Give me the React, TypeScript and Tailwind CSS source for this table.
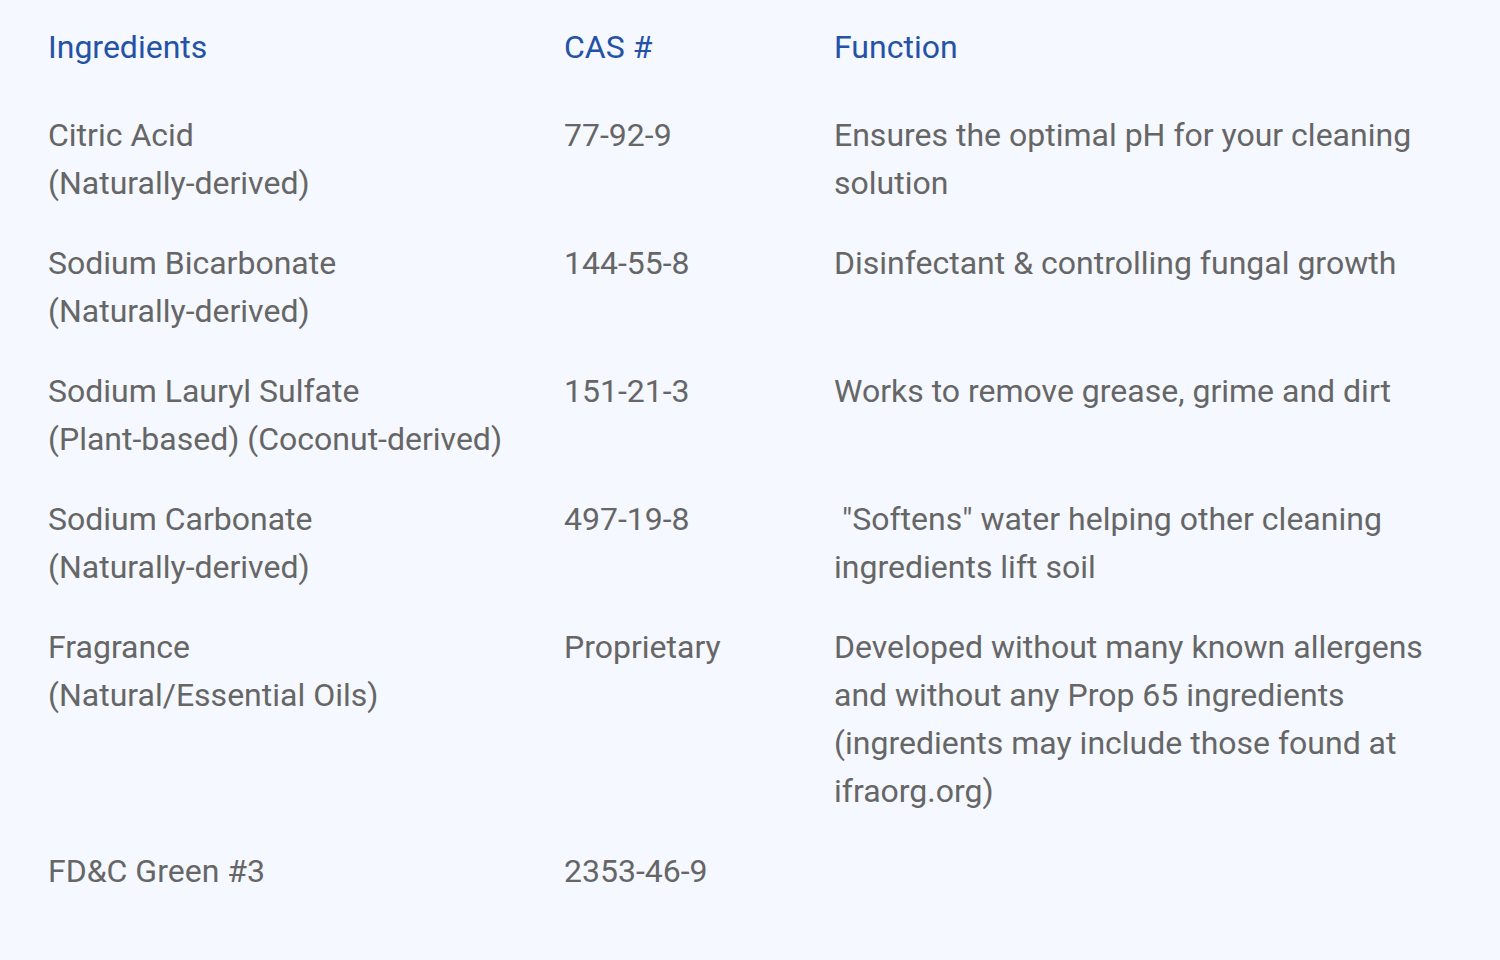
import React from "react";

const rows: { name: string[]; cas: string; fn: React.ReactNode }[] = [
  { name: ["Citric Acid", "(Naturally-derived)"], cas: "77-92-9", fn: "Ensures the optimal pH for your cleaning solution" },
  { name: ["Sodium Bicarbonate", "(Naturally-derived)"], cas: "144-55-8", fn: "Disinfectant & controlling fungal growth" },
  { name: ["Sodium Lauryl Sulfate", "(Plant-based) (Coconut-derived)"], cas: "151-21-3", fn: "Works to remove grease, grime and dirt" },
  { name: ["Sodium Carbonate", "(Naturally-derived)"], cas: "497-19-8", fn: "\u00a0\"Softens\" water helping other cleaning ingredients lift soil" },
  { name: ["Fragrance", "(Natural/Essential Oils)"], cas: "Proprietary", fn: "Developed without many known allergens and without any Prop 65 ingredients (ingredients may include those found at ifraorg.org)" },
  { name: ["FD&C Green #3"], cas: "2353-46-9", fn: "" },
];

export default function App() {
  return (
    <div
      className="w-[1500px] h-[960px] bg-[#f5f8fe] px-12 pt-[23px] text-[32px] leading-[48px] text-[#666666]"
      style={{ fontFamily: "Roboto, 'Liberation Sans', sans-serif" }}
    >
      <div className="grid grid-cols-[516px_270px_1fr] text-[#2352a6] pb-10">
        <div>Ingredients</div>
        <div>CAS #</div>
        <div>Function</div>
      </div>
      <div className="flex flex-col gap-8">
        {rows.map((r, i) => (
          <div key={i} className="grid grid-cols-[516px_270px_1fr]">
            <div>
              {r.name.map((n, j) => (
                <div key={j}>{n}</div>
              ))}
            </div>
            <div>{r.cas}</div>
            <div className="pr-1">{r.fn}</div>
          </div>
        ))}
      </div>
    </div>
  );
}
